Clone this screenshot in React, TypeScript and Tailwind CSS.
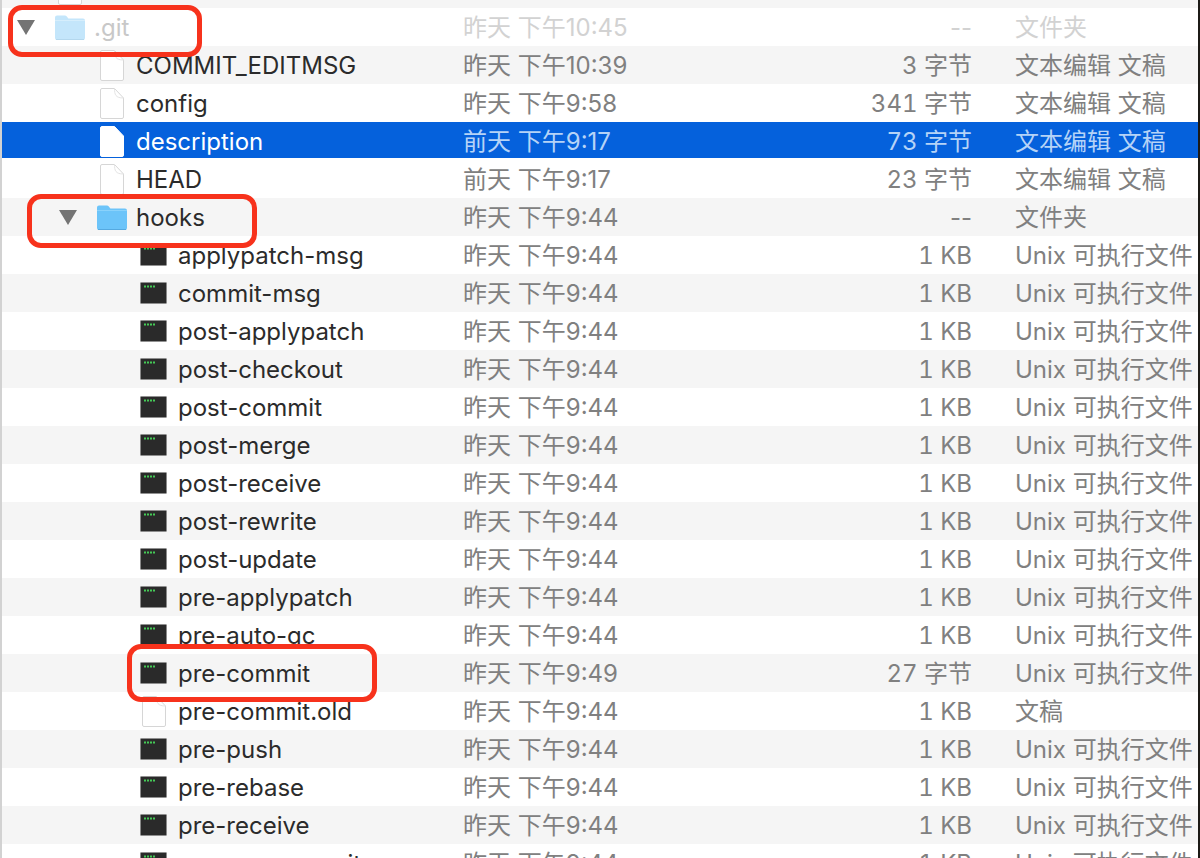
type Row = {
  name: string
  date: string
  size: string
  kind: string
  icon: "folder" | "doc" | "exec"
  indent: number
  open?: boolean
  faded?: boolean
  selected?: boolean
}

const unix = "Unix 可执行文件"
const text = "文本编辑 文稿"

function hook(name: string, date = "昨天 下午9:44", size = "1 KB"): Row {
  return { name, date, size, kind: unix, icon: "exec", indent: 2 }
}

const rows: Row[] = [
  { name: "COMMIT_EDITMSG", date: "昨天 下午10:39", size: "3 字节", kind: text, icon: "doc", indent: 1 },
  { name: "config", date: "昨天 下午9:58", size: "341 字节", kind: text, icon: "doc", indent: 1 },
  { name: "description", date: "前天 下午9:17", size: "73 字节", kind: text, icon: "doc", indent: 1, selected: true },
  { name: "HEAD", date: "前天 下午9:17", size: "23 字节", kind: text, icon: "doc", indent: 1 },
  { name: "hooks", date: "昨天 下午9:44", size: "--", kind: "文件夹", icon: "folder", indent: 1, open: true },
  hook("applypatch-msg"),
  hook("commit-msg"),
  hook("post-applypatch"),
  hook("post-checkout"),
  hook("post-commit"),
  hook("post-merge"),
  hook("post-receive"),
  hook("post-rewrite"),
  hook("post-update"),
  hook("pre-applypatch"),
  hook("pre-auto-gc"),
  hook("pre-commit", "昨天 下午9:49", "27 字节"),
  { name: "pre-commit.old", date: "昨天 下午9:44", size: "1 KB", kind: "文稿", icon: "doc", indent: 2 },
  hook("pre-push"),
  hook("pre-rebase"),
  hook("pre-receive"),
  hook("prepare-commit-msg"),
]

function FolderIcon({ light }: { light?: boolean }) {
  return (
    <svg width="30" height="25" viewBox="0 0 30 25">
      <path
        d="M0 5V2.500a2 2 0 0 1 2-2h8a2 2 0 0 1 1.600.8L13.400 3.500H28a2 2 0 0 1 2 2V23a2 2 0 0 1-2 2H2a2 2 0 0 1-2-2z"
        fill={light ? "#c4e6fb" : "#6cc4f9"}
      />
      <path d="M0 5.500h30" stroke={light ? "#d6eefc" : "#8ad2fb"} strokeWidth="1" />
      <path d="M1 24.500h28" stroke={light ? "#b4d8ee" : "#55a9e0"} strokeWidth="1" />
    </svg>
  )
}

function DocIcon({ solid }: { solid?: boolean }) {
  return (
    <svg width="24" height="31" viewBox="0 0 24 31">
      <path
        d="M.5 2a1.500 1.500 0 0 1 1.500-1.500h12.500L23.500 10v19a1.500 1.500 0 0 1-1.500 1.500H2A1.500 1.500 0 0 1 .5 29z"
        fill="#ffffff"
        stroke={solid ? "#ffffff" : "#d6d6d6"}
      />
      {!solid && <path d="M14.500.5c0 6 1 9.500 9 9.500" fill="none" stroke="#e4e4e4" />}
    </svg>
  )
}

function ExecIcon() {
  return (
    <svg width="27" height="22" viewBox="0 0 27 22">
      <rect x="0.400" y="0.400" width="26.200" height="21.200" rx="1" fill="#2a2a2a" stroke="#8f8f8f" strokeWidth="0.800" />
      <path d="M4 4.500h11" stroke="#45c956" strokeWidth="2" strokeDasharray="2 1" />
    </svg>
  )
}

function Triangle() {
  return (
    <svg width="18" height="15" viewBox="0 0 18 15">
      <path d="M0 0h18L9 15z" fill="#747474" />
    </svg>
  )
}

function FileRow({ row, striped }: { row: Row; striped: boolean }) {
  const bg = row.selected ? "bg-[#0561dc] shadow-[inset_0_-2px_0_#ffffff]" : striped ? "bg-[#f5f5f5]" : "bg-white"
  const nameColor = row.selected ? "text-white" : row.faded ? "text-[#c8c8c8]" : "text-[#2b2b2b]"
  const metaColor = row.selected ? "text-[#b5d3f7]" : row.faded ? "text-[#d2d2d2]" : "text-[#808080]"
  const iconWrap = row.indent === 0 ? "ml-[51px]" : row.indent === 1 ? "ml-[93px]" : "ml-[135px]"

  return (
    <div className={`flex h-[38px] items-center text-[24px] ${bg}`}>
      <div className="flex w-[461px] shrink-0 items-center">
        <div className={`relative flex w-[41px] shrink-0 items-center ${iconWrap}`}>
          {row.icon === "folder" && (
            <span className="ml-[2px] flex">
              <FolderIcon light={row.faded} />
            </span>
          )}
          {row.icon === "doc" && (
            <span className="ml-[5px] flex">
              <DocIcon solid={row.selected} />
            </span>
          )}
          {row.icon === "exec" && (
            <span className="ml-[3px] flex">
              <ExecIcon />
            </span>
          )}
          {row.open && (
            <span className="absolute left-[-36px] top-[5px] flex">
              <Triangle />
            </span>
          )}
        </div>
        <span className={`whitespace-nowrap pt-[2px] ${nameColor}`}>{row.name}</span>
      </div>
      <span className={`w-[300px] shrink-0 whitespace-nowrap pt-[2px] ${metaColor}`}>{row.date}</span>
      <span
        className={`w-[209px] shrink-0 whitespace-nowrap pt-[2px] text-right ${metaColor} ${row.size === "--" ? "" : "tabular-nums"}`}
      >
        {row.size}
      </span>
      <span className={`ml-[43px] whitespace-nowrap pt-[2px] ${metaColor}`}>{row.kind}</span>
    </div>
  )
}

function Mark({ className }: { className: string }) {
  return <div className={`absolute rounded-[14px] border-[5px] border-[#f7321c] ${className}`} />
}

export default function App() {
  return (
    <div
      className="relative h-[858px] w-[1200px] overflow-hidden border-l-2 border-r-2 border-l-[#d2d2d2] border-r-[#1c1a16] bg-white"
      style={{ fontFamily: '"Inter", "Noto Sans CJK SC", sans-serif' }}
    >
      <div className="-mt-[30px]">
        <FileRow row={{ name: "", date: "", size: "", kind: "", icon: "doc", indent: 0 }} striped={true} />
        <FileRow
          row={{
            name: ".git",
            date: "昨天 下午10:45",
            size: "--",
            kind: "文件夹",
            icon: "folder",
            indent: 0,
            open: true,
            faded: true,
          }}
          striped={false}
        />
        {rows.map((row, i) => (
          <FileRow key={row.name} row={row} striped={i % 2 === 0} />
        ))}
      </div>

      <Mark className="left-[6px] top-[5px] h-[52px] w-[194px]" />
      <Mark className="left-[25px] top-[194px] h-[54px] w-[230px]" />
      <Mark className="left-[125px] top-[644px] h-[58px] w-[250px]" />
    </div>
  )
}
